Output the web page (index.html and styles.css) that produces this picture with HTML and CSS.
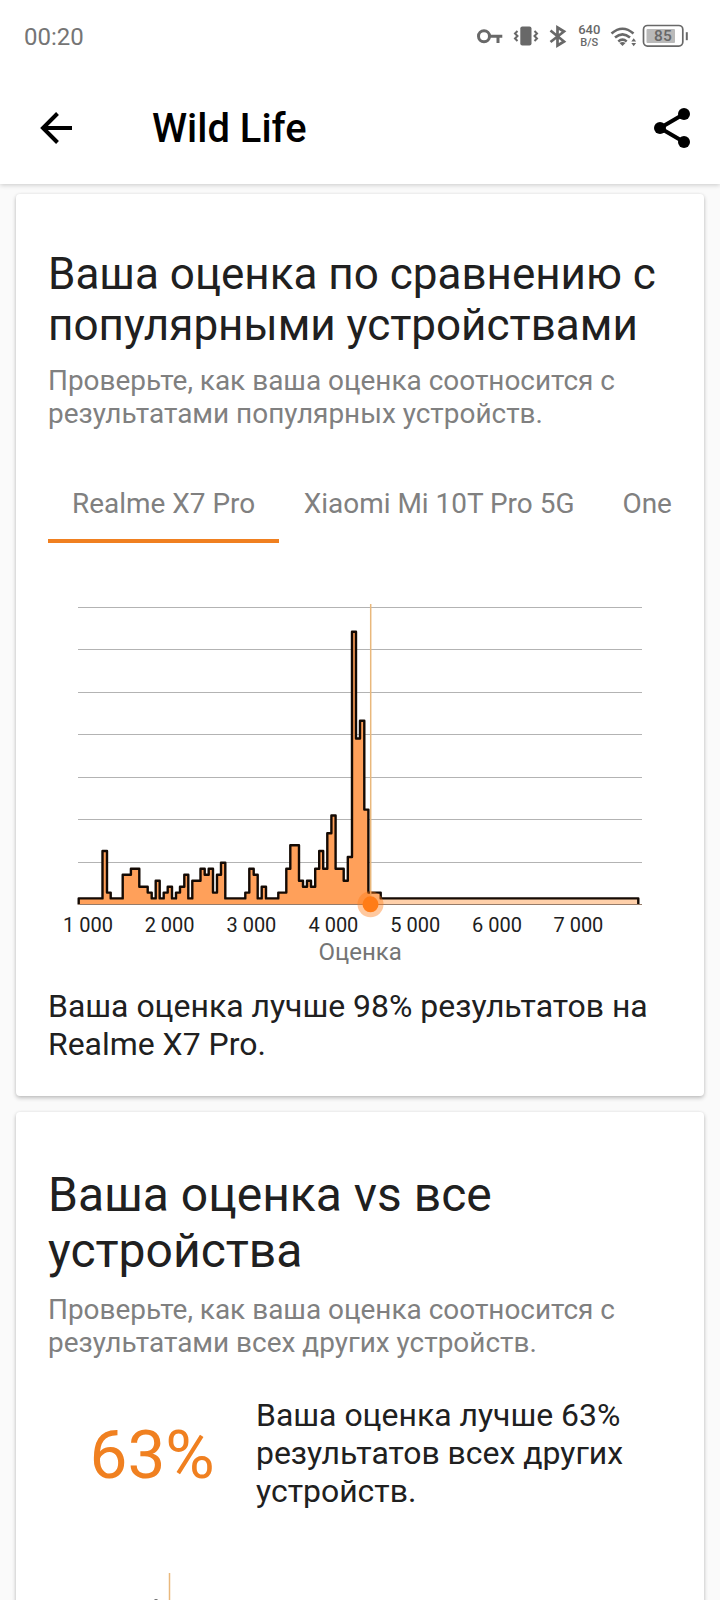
FILE: index.html
```html
<!DOCTYPE html>
<html lang="ru">
<head>
<meta charset="utf-8">
<title>Wild Life</title>
<link rel="stylesheet" href="styles.css">
</head>
<body>
<div class="screen">
  <header class="header">
    <div class="status">
      <span class="clock">00:20</span>
      <svg class="status-icons" width="216" height="28" viewBox="474 22 216 28" fill="none" stroke="#686868">
        <g stroke-width="3"><circle cx="484" cy="36.300" r="5.500"/><path d="M489.500 36.300H502.300M498 36.300v6.800"/></g>
        <rect x="520.300" y="26.400" width="11.200" height="19.200" rx="2" fill="#686868" stroke="none"/>
        <path d="M517.500 31l-2.500 2.500 2.500 2.500-2.500 2.500 2.500 2.500M534.500 31l2.500 2.500-2.500 2.500 2.500 2.500-2.500 2.500" stroke-width="2"/>
        <path d="M550.500 30.500l13.500 11-6.500 4V27.500l6.500 4-13.500 10.500" stroke-width="2.700"/>
        <text class="net-value" x="589.300" y="34">640</text>
        <text class="net-unit" x="589.300" y="45.900">B/S</text>
        <g stroke-width="2.600"><path d="M611.500 33.500q11-9.500 22 0M615 37.600q7.500-6.500 15 0M618.300 41.400q4.200-3.400 8.400 0"/></g>
        <path d="M619.500 43q3-2 6 0L622.500 46z" fill="#686868" stroke="none"/>
        <path d="M631.300 41.500l2.400-3.300 2.400 3.300zM631.300 43l2.400 3.300 2.400-3.300z" fill="#686868" stroke="none"/>
        <rect x="643.500" y="25.500" width="39.300" height="20.600" rx="4" stroke-width="1.700"/>
        <rect x="646.500" y="29" width="28.500" height="14" rx="1" fill="#b9b9b9" stroke="none"/>
        <path d="M686.800 32.200v8" stroke-width="2"/>
        <text class="battery-value" x="662.900" y="41.400">85</text>
      </svg>
    </div>
    <div class="toolbar">
      <svg class="back" width="34" height="34" viewBox="39 111 34 34" fill="none" stroke="#000" stroke-width="4"><path d="M72 128H43M57.500 113.500L43 128l14.500 14.500"/></svg>
      <h1 class="title">Wild Life</h1>
      <svg class="share" width="38" height="42" viewBox="653 107 38 42"><path d="M684 114l-24 14 24 14" fill="none" stroke="#000" stroke-width="4"/><circle cx="660" cy="128" r="6"/><circle cx="684" cy="114" r="6"/><circle cx="684" cy="142" r="6"/></svg>
    </div>
  </header>
  <main class="cards">
    <section class="card card-popular">
      <h2 class="heading">Ваша оценка по сравнению с<br>популярными устройствами</h2>
      <p class="sub">Проверьте, как ваша оценка соотносится с<br>результатами популярных устройств.</p>
      <nav class="tabs">
        <span class="tab active">Realme X7 Pro</span>
        <span class="tab">Xiaomi Mi 10T Pro 5G</span>
        <span class="tab">One</span>
      </nav>
      <svg class="chart" width="624" height="370" viewBox="48 600 624 370">
        <defs>
          <clipPath id="below"><rect x="70" y="600" width="300.600" height="310"/></clipPath>
          <clipPath id="above"><rect x="370.600" y="600" width="280" height="310"/></clipPath>
          <path id="hist" d="M78.700 904.500V898.400H102.500V851H107V892.600H110.700V898.400H122.700V874.700H130.900V868.700H139.300V886.700H147.700V892.600H151.700V898.400H155.700V880.700H159.700V898.400H163.700V892.600H167.700V886.700H172V898.400H176V892.600H180V886.700H184.300V874.700H188.300V898.400H192.300V880.700H200.500V868.700H204.700V874.700H208.700V868.700H213V892.600H217V874.700H221V862.700H225.300V898.400H245.300V892.600H249.300V868.700H253.700V874.700H257.700V898.400H261.700V886.700H266V898.400H278.300V892.600H286.300V868.700H290.300V845.200H299V880.700H303V886.700H307V880.700H311V886.700H315.200V868.700H319.200V851H323.200V868.700H327.300V833.300H331.400V815.500H335.600V868.700H343.700V880.700H347.800V857H352V631.700H356V738.500H360V720.700H364.300V809.600H368.400V892.600H380.700V898.400H638.300V904.500"/>
        </defs>
        <path class="grid" d="M78 607.500H642M78 649.500H642M78 692.500H642M78 734.500H642M78 777.500H642M78 819.500H642M78 862.500H642"/>
        <g clip-path="url(#below)"><use href="#hist" class="fill"/></g>
        <g clip-path="url(#above)"><use href="#hist" class="fill-light"/></g>
        <use href="#hist" class="outline"/>
        <path class="axis" d="M78 904.500H642"/>
        <path class="marker-line" d="M370.700 604V904"/>
        <circle class="halo" cx="370.500" cy="904.300" r="13"/>
        <circle class="dot" cx="370.500" cy="904.300" r="8"/>
        <g class="ticks">
          <text x="88" y="931.500">1 000</text><text x="169.600" y="931.500">2 000</text><text x="251.400" y="931.500">3 000</text><text x="333.400" y="931.500">4 000</text><text x="415.200" y="931.500">5 000</text><text x="497" y="931.500">6 000</text><text x="578.400" y="931.500">7 000</text>
        </g>
        <text class="axis-title" x="360.200" y="959.700">Оценка</text>
      </svg>
      <p class="body-text result">Ваша оценка лучше 98% результатов на<br>Realme X7 Pro.</p>
    </section>
    <section class="card card-all">
      <h2 class="heading large">Ваша оценка vs все<br>устройства</h2>
      <p class="sub">Проверьте, как ваша оценка соотносится с<br>результатами всех других устройств.</p>
      <div class="summary">
        <div class="percent">63%</div>
        <p class="body-text">Ваша оценка лучше 63%<br>результатов всех других<br>устройств.</p>
      </div>
      <svg class="chart-next" width="624" height="30" viewBox="48 1570 624 30"><path class="marker-line" d="M169.500 1573V1600"/><path d="M154.500 1599h3v1h-3z" fill="#777"/></svg>
    </section>
  </main>
</div>
</body>
</html>
```

FILE: styles.css
```css
* { box-sizing: border-box; }
body { margin: 0; font-family: Roboto, sans-serif; background: #fafafa; color: #202020; }
h1, h2, p { margin: 0; font-weight: 400; }
svg { display: block; flex: none; }
.screen { width: 720px; height: 1600px; overflow: hidden; display: flex; flex-direction: column; }
.header { position: relative; flex: none; height: 184px; background: #fff; box-shadow: 0 1px 5px rgba(0,0,0,.2); }
.status { display: flex; justify-content: space-between; height: 72px; padding: 22px 30px 0 24px; }
.clock { font-size: 24px; line-height: 31px; color: #757575; }
.status-icons text { text-anchor: middle; fill: #686868; stroke: none; font-weight: 500; }
.status-icons .net-value { font-size: 13px; }
.status-icons .net-unit { font-size: 11px; }
.status-icons .battery-value { font-size: 15.500px; }
.toolbar { display: flex; align-items: center; height: 112px; padding: 0 29px 0 39px; }
.title { margin-left: 79px; flex: 1; padding-top: 2px; font-size: 39.900px; line-height: 48px; font-weight: 500; color: #000; }
.cards { display: flex; flex-direction: column; gap: 16px; padding: 10.400px 16px 0; }
.card { flex: none; background: #fff; border-radius: 4px; box-shadow: 0 2px 4px rgba(0,0,0,.24), 0 0 3px rgba(0,0,0,.06); padding: 54.600px 0 0 32px; white-space: nowrap; overflow: hidden; }
.card-popular { height: 901.600px; }
.card-all { height: 520px; padding-top: 55px; }
.heading { font-size: 44px; line-height: 51.200px; }
.heading.large { font-size: 48px; line-height: 56.500px; }
.sub { margin-top: 13.600px; font-size: 27.950px; line-height: 32.800px; color: #808080; }
.card-all .sub { margin-top: 14px; }
.tabs { display: flex; width: 640px; height: 83px; margin-top: 29.400px; overflow: hidden; }
.tab { padding: 27px 24px 0; font-size: 27.950px; line-height: 33px; color: #808080; }
.tab.active { border-bottom: 4px solid #f08020; }
.tab.active + .tab { padding-left: 24.600px; }
.chart { margin-top: 57px; }
.grid, .axis { fill: none; stroke: #b3b3b3; stroke-width: 1; }
.axis { stroke: #967b69; }
.fill { fill: #ffa05a; }
.fill-light { fill: #ffd0aa; }
.outline { fill: none; stroke: #140a04; stroke-width: 2.400; stroke-linejoin: round; }
.marker-line { stroke: #e9b87c; stroke-width: 1.500; }
.halo { fill: #ff7c17; opacity: .42; }
.dot { fill: #ff7c17; }
.ticks { font-size: 20px; text-anchor: middle; fill: #202020; }
.axis-title { font-size: 24px; text-anchor: middle; fill: #757575; }
.body-text { font-size: 31.950px; line-height: 38px; }
.result { margin-top: 17.400px; }
.summary { display: flex; align-items: center; margin-top: 36.600px; }
.percent { width: 208px; padding: 3px 0 0 41.500px; font-size: 67.500px; line-height: 79px; color: #f08020; }
.chart-next { margin-top: 59.800px; }
```
